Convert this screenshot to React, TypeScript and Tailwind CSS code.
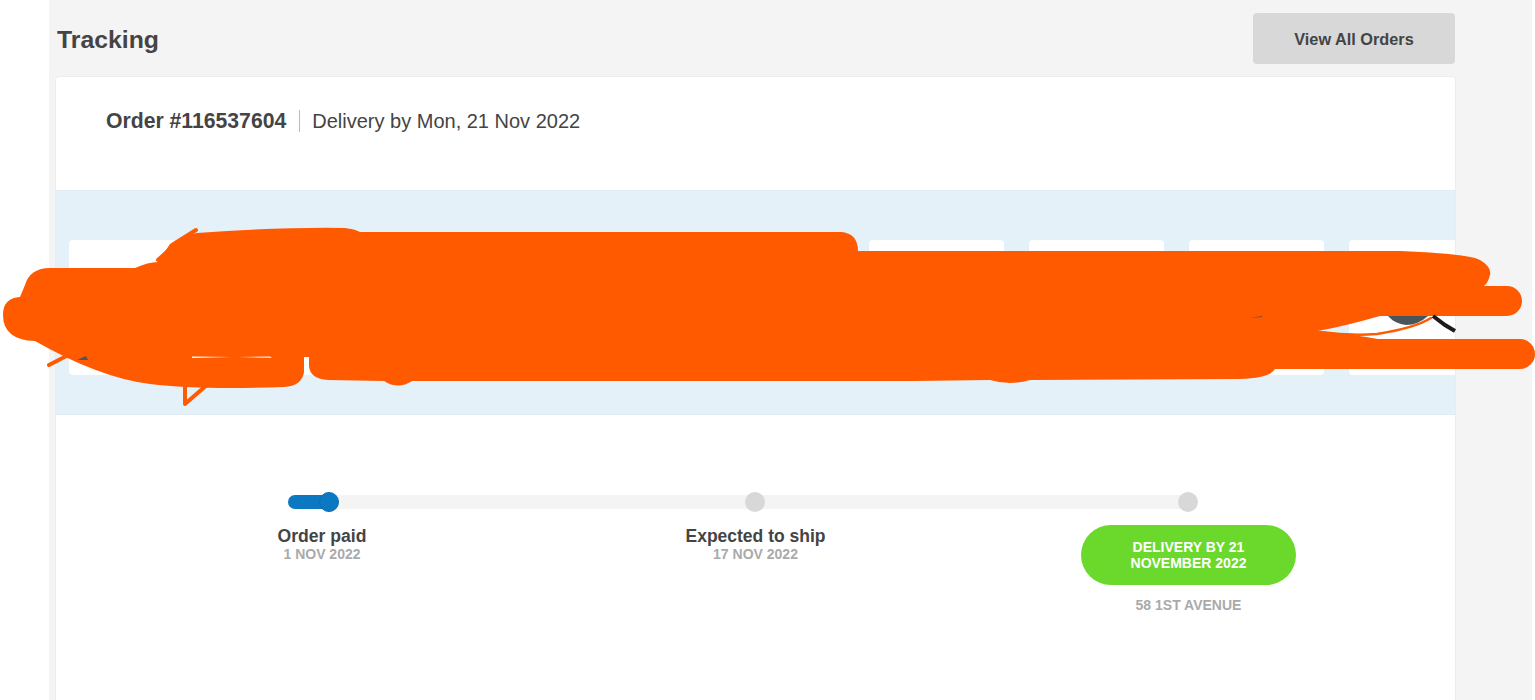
const font = "font-['Liberation_Sans',Arial,sans-serif]";

function Thumb() {
  return <div className="h-[135px] w-[135px] shrink-0 rounded bg-white" />;
}

function Scribble() {
  return (
    <svg className="pointer-events-none absolute left-0 top-0" width="1535" height="700" viewBox="0 0 1535 700">
      <path
        fill="#ff5a00"
        d="M50 268 L135 268 Q148 262 158 262 L170 244 Q180 236 197 233 Q280 227 345 228 Q355 229 360 232 L842 232 Q858 234 858 251 L1400 251 Q1470 254 1480 260 Q1492 267 1490 275 Q1488 283 1484 286 L1507 286 A15 15 0 0 1 1507 316 L1380 316 Q1345 326 1318 331 Q1350 334 1378 339 L1520 339 A15 15 0 0 1 1520 369 L1275 369 Q1270 378 1240 379 L1030 380 Q1010 386 990 380 L915 381 L412 381 Q398 390 384 381 L328 380 Q310 379 309 366 L309 357 L304 357 L304 372 Q302 386 284 387 Q200 390 150 384 Q100 378 35 341 Q3 340 3 315 Q3 298 20 297 L25 285 Q30 268 50 268 Z"
      />
      <path stroke="#ff5a00" strokeWidth="4" strokeLinecap="round" strokeLinejoin="round" fill="none" d="M49 365 L80 349 M185 385 L185 404 L208 384 M158 260 L180 240 L196 230" />
      <path stroke="#ff5a00" strokeWidth="2.5" strokeLinecap="round" fill="none" d="M1320 332 Q1350 336 1377 334 Q1415 328 1431 318" />
      <path fill="#ffffff" d="M192 356.5 L232 357 L192 358 Z M238 357 L270 356.5 L272 357.8 Z" />
      <path fill="#4b5563" d="M77 360 L86 356 L88 360 Z M1250 318 L1262 316 L1262 317 Z" />
      <path fill="#4a5559" d="M1388 316 L1428 316 Q1418 325 1406 325 Q1395 324 1388 316 Z" />
      <path stroke="#1c1c1c" strokeWidth="4" fill="none" d="M1433 316 L1445 325 L1455 331" />
    </svg>
  );
}

export default function App() {
  return (
    <div className={`${font} relative flex h-[700px] overflow-hidden bg-white text-[#444]`}>
      <div className="ml-[49px] h-full w-[1483px] bg-[#f4f4f4] pl-[6px]">
        <div className="flex h-[76px] w-[1400px] items-start justify-between">
          <h1 className="ml-[2px] mt-[25px] text-[24.8px] font-bold leading-[30px]">Tracking</h1>
          <button className="mt-[13px] h-[51px] w-[202px] rounded-sm bg-[#d8d8d8] pt-[2px] text-[16.3px] font-bold">View All Orders</button>
        </div>

        <div className="h-[640px] w-[1401px] rounded-t border border-[#ececec] bg-white">
          <div className="flex h-[113px] items-start pl-[50px] pt-[33px]">
            <span className="text-[21.2px] font-bold leading-[22px]">Order #116537604</span>
            <span className="ml-[13px] mr-[12px] h-[22px] w-px bg-[#bbb]" />
            <span className="text-[20px] leading-[22px]">Delivery by Mon, 21 Nov 2022</span>
          </div>

          <div className="flex h-[225px] gap-[25px] overflow-hidden border-y border-[#e0ebf3] bg-[#e5f1f9] pl-[13px] pt-[49px]">
            <Thumb />
            <Thumb />
            <Thumb />
            <Thumb />
            <Thumb />
            <Thumb />
            <Thumb />
            <Thumb />
            <Thumb />
          </div>

          <div className="relative ml-[232px] mt-[80px] h-[14px] w-[900px] rounded-full bg-[#f4f4f4]">
            <div className="h-full w-[41px] rounded-l-full bg-[#0c78c2]" />
            <span className="absolute left-[31px] top-[-3px] h-5 w-5 rounded-full border border-[#0a6cb0] bg-[#0c78c2]" />
            <span className="absolute left-[457px] top-[-3px] h-5 w-5 rounded-full bg-[#d8d8d8]" />
            <span className="absolute left-[890px] top-[-3px] h-5 w-5 rounded-full bg-[#d8d8d8]" />
          </div>

          <div className="ml-[158px] mt-[17px] flex w-[1082px] items-start justify-between text-center">
            <div className="w-[216px]">
              <p className="text-[17.6px] font-bold leading-[20px]">Order paid</p>
              <p className="text-[14px] font-bold leading-[16px] text-[#aaa]">1 NOV 2022</p>
            </div>
            <div className="w-[216px]">
              <p className="text-[17.5px] font-bold leading-[20px]">Expected to ship</p>
              <p className="text-[14px] font-bold leading-[16px] text-[#aaa]">17 NOV 2022</p>
            </div>
            <div className="w-[215px]">
              <div className="-mt-[1px] flex h-[60px] items-center justify-center rounded-full bg-[#6bd92c] px-[40px] text-[14px] font-bold leading-[16px] text-white">
                DELIVERY BY 21 NOVEMBER 2022
              </div>
              <p className="mt-3 text-[14px] font-bold leading-[16px] text-[#aaa]">58 1ST AVENUE</p>
            </div>
          </div>
        </div>
      </div>
      <Scribble />
    </div>
  );
}
